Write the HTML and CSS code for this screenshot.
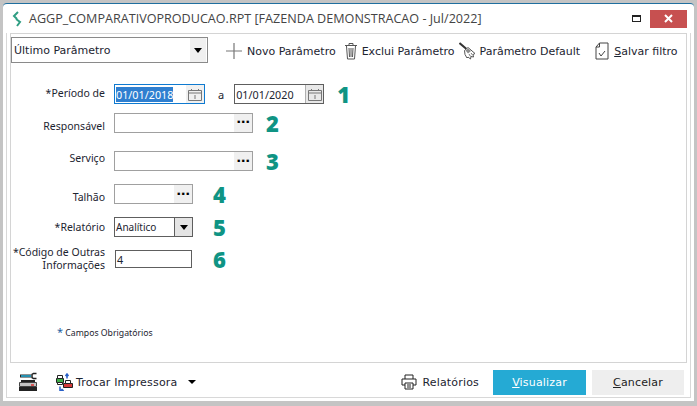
FILE: index.html
```html
<!DOCTYPE html>
<html lang="en">
<head>
    <meta charset="UTF-8">
    <title>AGGP_COMPARATIVOPRODUCAO.RPT</title>
    <link rel="stylesheet" href="styles.css">
</head>
<body>
    <div class="window">
        <div class="title-bar">
            <svg class="logo" width="10" height="16" viewBox="0 0 10 16"><path d="M6 1 2 5l3 3M4 8l4 3-3 4" fill="none" stroke="#2f9e83" stroke-width="2"/></svg>
            <span class="title">AGGP_COMPARATIVOPRODUCAO.RPT [FAZENDA DEMONSTRACAO - Jul/2022]</span>
            <span class="maximize"></span>
            <span class="close">
                <svg width="9" height="9" viewBox="0 0 9 9"><path d="M1 1l7 7M8 1 1 8" stroke="#fff" stroke-width="2"/></svg>
            </span>
        </div>
        <div class="frame">
            <div class="panel">
                <div class="toolbar">
                    <div class="param-select">
                        <span>Último Parâmetro</span>
                        <span class="select-arrow"><i class="arrow"></i></span>
                    </div>
                    <div class="tool tool-new">
                        <svg width="18" height="18" viewBox="0 0 18 18"><path d="M9 1v16M1 9h16" stroke="#777" stroke-width="1.2"/></svg>
                        Novo Parâmetro
                    </div>
                    <div class="tool tool-delete">
                        <svg width="14" height="18" viewBox="0 0 14 18"><path d="M1 3.500h12M5 3V1.500h4V3M2.500 4l1 13h7l1-13M5 6l.5 9M7 6v9M9 6l-.5 9" fill="none" stroke="#555"/></svg>
                        Exclui Parâmetro
                    </div>
                    <div class="tool tool-default">
                        <svg width="17" height="18" viewBox="0 0 17 18"><path d="M.5 1l7 6" stroke="#333" stroke-width="2"/><path d="M5.500 8.500 9 5.500l7 6-2 1 .5 2.500-2.500-.5-.5 2.500-2.500-2-1 1-2-3.500z" fill="#fff" stroke="#555"/><path d="M6.500 8.500 9 6.500l3 2.500-3 2.500z" fill="#8c8c8c"/><path d="M10 12l1.500 2.500M12 11l1.500 2" stroke="#777"/></svg>
                        Parâmetro Default
                    </div>
                    <div class="tool tool-save">
                        <svg width="14" height="18" viewBox="0 0 14 18"><path d="M4.500 1H13v16H1V5zM4.500 1v4H1" fill="#fff" stroke="#444"/><path d="M4 11l2 3 4-5" fill="none" stroke="#444"/></svg>
                        <span><u>S</u>alvar filtro</span>
                    </div>
                </div>

                <div class="form">
                    <div class="row">
                        <label class="label label-up-sm">*Período de</label>
                        <div class="input input-date input-focus">
                            <span class="selected">01/01/2018</span>
                            <span class="field-btn">
                                <svg width="14" height="13" viewBox="0 0 14 13"><path d="M.5 2.500h13v10H.5zM.5 5h13M3.500 1v2M10.500 1v2M7 7v4" fill="none" stroke="#777"/></svg>
                            </span>
                        </div>
                        <span class="sep">a</span>
                        <div class="input input-date-to input-dark">
                            <span>01/01/2020</span>
                            <span class="field-btn field-btn-dark">
                                <svg width="14" height="13" viewBox="0 0 14 13"><path d="M.5 2.500h13v10H.5zM.5 5h13M3.500 1v2M10.500 1v2M7 7v4" fill="none" stroke="#777"/></svg>
                            </span>
                        </div>
                        <b class="num num-1">1</b>
                    </div>
                    <div class="row row-resp">
                        <label class="label label-down">Responsável</label>
                        <div class="input input-wide"><span class="field-btn dots">...</span></div>
                        <b class="num">2</b>
                    </div>
                    <div class="row row-serv">
                        <label class="label label-up">Serviço</label>
                        <div class="input input-wide"><span class="field-btn dots">...</span></div>
                        <b class="num">3</b>
                    </div>
                    <div class="row row-talhao">
                        <label class="label label-down-sm">Talhão</label>
                        <div class="input input-short"><span class="field-btn dots">...</span></div>
                        <b class="num num-short">4</b>
                    </div>
                    <div class="row row-rel">
                        <label class="label">*Relatório</label>
                        <div class="input input-short input-dark">
                            <span class="combo-text">Analítico</span>
                            <span class="field-btn combo-btn"><i class="arrow"></i></span>
                        </div>
                        <b class="num num-short">5</b>
                    </div>
                    <div class="row row-cod">
                        <label class="label">*Código de Outras<br>Informações</label>
                        <div class="input input-code input-dark"><span>4</span></div>
                        <b class="num num-code">6</b>
                    </div>
                    <div class="required"><span class="star">*</span> Campos Obrigatórios</div>
                </div>
            </div>

            <div class="footer">
                <svg class="printer-cfg" width="20" height="20" viewBox="0 0 20 20"><path d="M2 4h11" stroke="#222" stroke-width="3"/><path d="M3 4h10" stroke="#29b6e0" stroke-width="1.500"/><path d="M18.500 1.500h-3l-1.500 1v3l1.500 1h3" fill="none" stroke="#222" stroke-width="1.500"/><path d="M3 9h14" stroke="#222" stroke-width="2"/><path d="M1.500 10.500h17v4h-17z" fill="#c4c4c4" stroke="#444"/><path d="M1 15h18v4H1z" fill="#222"/><path d="M13 13h3" stroke="#d33" stroke-width="1.500"/></svg>
                <div class="swap">
                    <svg width="18" height="18" viewBox="0 0 18 18"><path d="M1.500 5.500h7v4h-7z" fill="#3fae4a" stroke="#222"/><path d="M2.500 2.500h5v3h-5zM2.500 9.500h5v2h-5z" fill="#fff" stroke="#222"/><path d="M8.500 10.500h9v4h-9z" fill="#d43a3a" stroke="#222"/><path d="M10.500 7.500h5v3h-5z" fill="#fff" stroke="#222"/><path d="M12 1.500v4M10.500 3l1.500-2 1.500 2M5 13.500v4h3M6.500 16l1.500 1.500-1.500 1" fill="none" stroke="#2860c8" stroke-width="1.500"/></svg>
                    <span>Trocar Impressora</span>
                    <i class="arrow arrow-swap"></i>
                </div>
                <div class="reports">
                    <svg width="16" height="16" viewBox="0 0 16 16"><path d="M4 5V1h8v4M4 11H1V5h14v6h-3M4 9h8v6H4zM6 11h4M6 13h4" fill="none" stroke="#222"/></svg>
                    Relatórios
                </div>
                <button class="btn btn-primary"><u>V</u>isualizar</button>
                <button class="btn btn-cancel"><u>C</u>ancelar</button>
            </div>
        </div>
    </div>
</body>
</html>
```

FILE: styles.css
```css
* {
    box-sizing: border-box;
}

body {
    margin: 0;
    width: 697px;
    height: 406px;
    padding: 3px 3px 5px 3px;
    background-color: #c4c4c4;
    font-family: "DejaVu Sans", sans-serif;
    font-size: 11px;
    color: #1c2430;
    overflow: hidden;
}

.window {
    height: 100%;
    display: flex;
    flex-direction: column;
    background-color: #fff;
    border-top: 1px solid #1f6f9f;
    border-radius: 4px 4px 0 0;
    padding-bottom: 3px;
}

.title-bar {
    height: 29px;
    flex: none;
    display: flex;
    align-items: center;
    padding: 0 7px;
    font-family: "Open Sans", sans-serif;
    font-size: 12.600px;
    color: #444;
}

.logo {
    margin: 0 7px 0 2px;
}

.title {
    flex: 1;
    white-space: nowrap;
}

.maximize {
    width: 9px;
    height: 7px;
    border: 1px solid #222;
    border-top-width: 2px;
    margin-right: 9px;
}

.close {
    width: 37px;
    height: 18px;
    background-color: #c75050;
    display: flex;
    align-items: center;
    justify-content: center;
}

.frame {
    flex: 1;
    margin-left: 3px;
    margin-right: 3px;
    padding: 0 3px;
    border-left: 1px solid #d8d8d8;
    border-right: 1px solid #d8d8d8;
    border-bottom: 1px solid #d8d8d8;
    display: flex;
    flex-direction: column;
}

.panel {
    flex: 1;
    border: 1px solid #d4d4d4;
    display: flex;
    flex-direction: column;
}

.toolbar {
    display: flex;
    align-items: center;
    height: 32px;
}

.param-select {
    width: 197px;
    height: 26px;
    border: 1px solid #8a8a8a;
    display: flex;
    align-items: center;
    justify-content: space-between;
    padding-left: 2px;
}

.select-arrow {
    width: 16px;
    height: 24px;
    background-color: #f0f0f0;
    margin-right: 1px;
    display: flex;
    align-items: center;
    justify-content: center;
}

.arrow {
    display: block;
    border-left: 4px solid transparent;
    border-right: 4px solid transparent;
    border-top: 5px solid #000;
}

.tool {
    display: flex;
    align-items: center;
    gap: 4px;
    white-space: nowrap;
    margin-top: 2px;
}

.tool-new {
    margin-left: 17px;
}

.tool-delete {
    margin-left: 8px;
}

.tool-default {
    margin-left: 4px;
}

.tool-save {
    margin-left: 15px;
    gap: 5px;
}

.form {
    flex: 1;
    padding-top: 18px;
}

.row {
    display: flex;
    align-items: center;
    font-family: "Noto Sans", sans-serif;
}

.label {
    width: 94px;
    flex: none;
    text-align: right;
    margin-right: 9px;
    line-height: 13px;
    font-size: 10.500px;
    white-space: nowrap;
}

.label-up-sm {
    margin-bottom: 1px;
}

.label-up {
    margin-bottom: 6px;
}

.label-down {
    margin-top: 8px;
}

.label-down-sm {
    margin-top: 6px;
}

.input {
    height: 20px;
    border: 1px solid #a0a0a0;
    display: flex;
    align-items: center;
    justify-content: space-between;
    background-color: #fff;
    padding-left: 1px;
    font-size: 10.800px;
}

.input-date {
    width: 91px;
}

.input-date-to {
    width: 90px;
}

.input-focus {
    border-color: #0f7ad0;
}

.input-dark {
    border-color: #5e5e5e;
}

.input-wide {
    width: 139px;
}

.input-short {
    width: 79px;
}

.input-code {
    width: 77px;
    height: 18px;
    margin-left: 1px;
}

.combo-text {
    font-size: 10px;
}

.selected {
    background-color: #2f7fd0;
    color: #fff;
}

.sep {
    margin: 0 10px 0 13px;
}

.field-btn {
    width: 18px;
    height: 18px;
    background-color: #f0f0f0;
    display: flex;
    align-items: center;
    justify-content: center;
}

.field-btn-dark {
    background-color: #e8e8e8;
    border-left: 1px solid #b0b0b0;
}

.dots {
    margin-left: auto;
    font-family: "DejaVu Sans", sans-serif;
    font-size: 13px;
    font-weight: bold;
    letter-spacing: -0.5px;
    color: #000;
    padding-bottom: 8px;
}

.combo-btn {
    background-color: #e4e4e4;
    border-left: 1px solid #5e5e5e;
}

.num {
    font-family: "Open Sans", sans-serif;
    font-size: 22px;
    font-weight: 800;
    line-height: 20px;
    color: #0f9484;
    margin-left: 13px;
}

.num-1 {
    margin-left: 13px;
}

.num-short {
    margin-left: 20px;
}

.num-code {
    margin-left: 21px;
}

.row-resp {
    margin-top: 8px;
}

.row-serv {
    margin-top: 18px;
}

.row-talhao,
.row-rel {
    margin-top: 13px;
}

.row-cod {
    margin-top: 9px;
}

.required {
    font-family: "Noto Sans", sans-serif;
    font-size: 8.700px;
    margin: 52px 0 0 46px;
}

.star {
    color: #1f5f9f;
    font-size: 11px;
}

.footer {
    height: 34px;
    flex: none;
    display: flex;
    align-items: center;
    padding: 4px 3px 0 8px;
    letter-spacing: 0.18px;
}

.swap {
    display: flex;
    align-items: center;
    gap: 3px;
    margin-left: 17px;
}

.arrow-swap {
    margin-left: 8px;
    border-left-width: 4px;
    border-right-width: 4px;
    border-top-width: 4px;
}

.reports {
    display: flex;
    align-items: center;
    gap: 5px;
    margin-left: auto;
    margin-right: 14px;
}

.btn {
    height: 25px;
    border: none;
    font-family: "DejaVu Sans", sans-serif;
    font-size: 11px;
    letter-spacing: 0.18px;
    width: 93px;
}

.btn-primary {
    background-color: #25aad4;
    color: #fff;
    margin-right: 6px;
}

.btn-cancel {
    width: 92px;
    background-color: #eeeeee;
    color: #222;
}
```
